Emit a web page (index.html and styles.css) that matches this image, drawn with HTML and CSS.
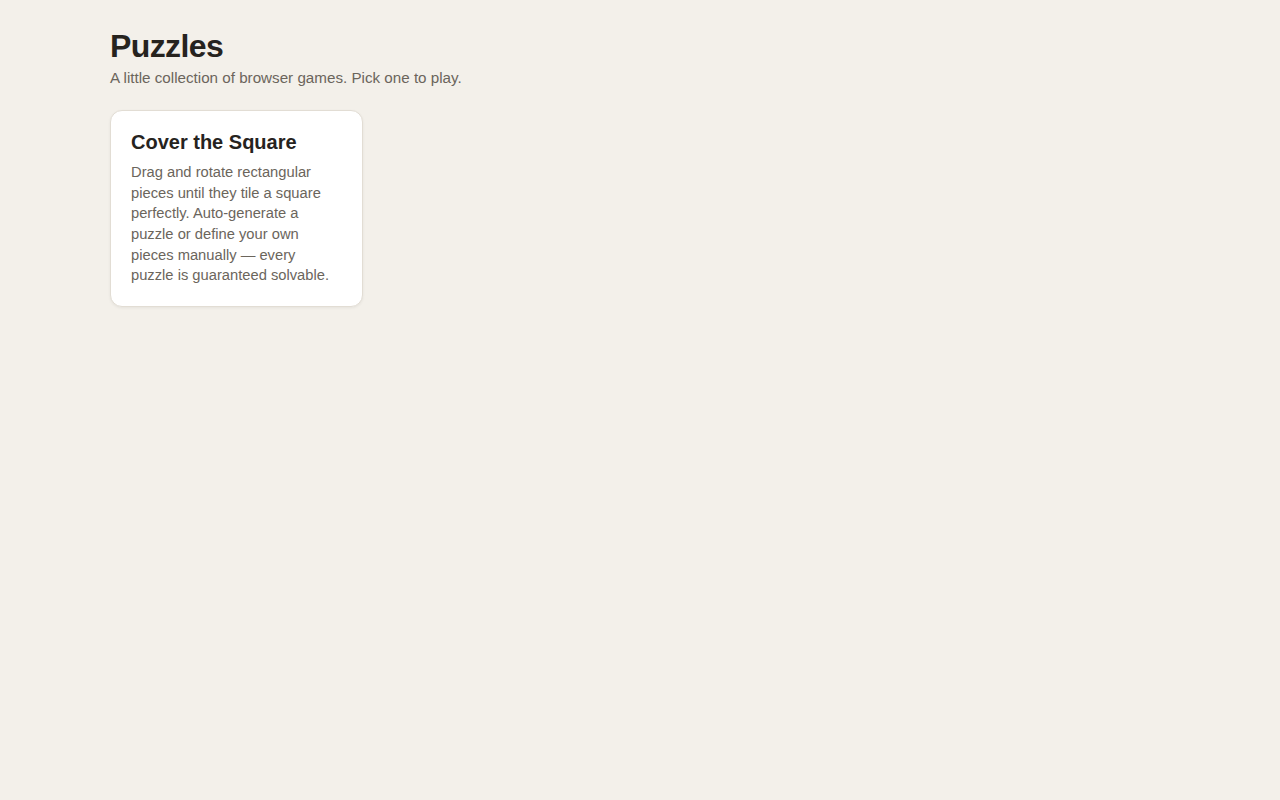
FILE: index.html
```html
<!DOCTYPE html>
<html lang="en">
<head>
  <meta charset="UTF-8">
  <meta name="viewport" content="width=device-width, initial-scale=1.0">
  <title>Puzzles</title>
  <link rel="stylesheet" href="styles.css">
</head>
<body>

  <div class="page">
    <header class="header">
      <h1>Puzzles</h1>
      <p class="subtitle">A little collection of browser games. Pick one to play.</p>
    </header>

    <div class="games">
      <a class="game-card" href="#">
        <h2>Cover the Square</h2>
        <p>Drag and rotate rectangular pieces until they tile a square perfectly. Auto-generate a puzzle or define your own pieces manually — every puzzle is guaranteed solvable.</p>
      </a>
    </div>
  </div>

</body>
</html>
```

FILE: styles.css
```css
body {
  font-family: 'Liberation Sans', Arial, sans-serif;
  background-color: #f3f0ea;
  margin: 0;
  color: #26231e;
}

.page {
  max-width: 1060px;
  margin: 0 auto;
  padding: 29px 0 40px;
}

.header h1 {
  font-size: 32px;
  font-weight: bold;
  letter-spacing: -0.6px;
  margin: 0;
  line-height: 1.1;
}

.subtitle {
  margin: 5px 0 0;
  font-size: 15.2px;
  color: #6b655c;
}

.games {
  display: grid;
  grid-template-columns: repeat(auto-fill, minmax(240px, 1fr));
  gap: 16px;
  margin-top: 24px;
}

.game-card {
  display: block;
  background-color: #fff;
  border: 1px solid #e2ddd4;
  border-radius: 12px;
  padding: 20px;
  box-shadow: 0 1px 3px rgba(0, 0, 0, 0.06);
  text-decoration: none;
  color: inherit;
}

.game-card h2 {
  font-size: 20px;
  margin: 0 0 9px;
  line-height: 1.1;
}

.game-card p {
  margin: 0;
  font-size: 14.72px;
  line-height: 1.4;
  color: #6b655c;
}
```
